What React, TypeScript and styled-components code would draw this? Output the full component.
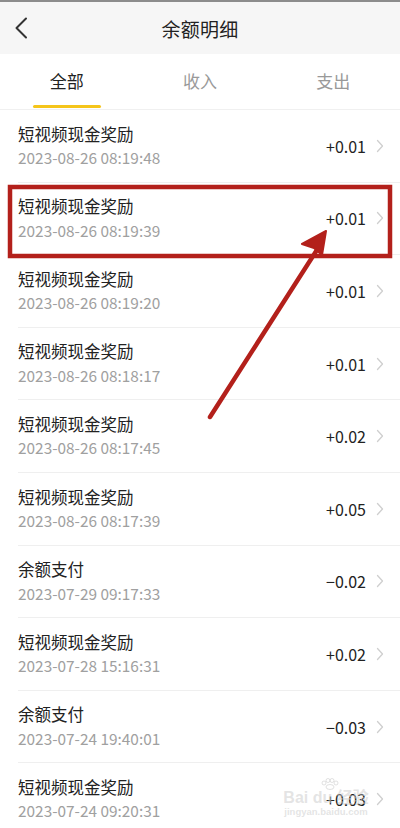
import React from "react";
import styled, { createGlobalStyle } from "styled-components";

const GlobalStyle = createGlobalStyle`
  html, body {
    margin: 0;
    padding: 0;
    background: #ffffff;
  }
  body {
    font-family: "Noto Sans CJK SC", "Noto Sans", Roboto, sans-serif;
    -webkit-font-smoothing: antialiased;
  }
  * { box-sizing: border-box; }
`;

const Page = styled.div`
  position: relative;
  width: 400px;
  height: 828px;
  overflow: hidden;
  background: #ffffff;
`;

const Header = styled.header`
  display: grid;
  grid-template-columns: 1fr auto 1fr;
  align-items: center;
  height: 54px;
  background: #f6f6f6;
  border-top: 2px solid #8c8c8c;
`;

const BackButton = styled.button`
  display: flex;
  align-items: center;
  justify-self: start;
  background: none;
  border: none;
  padding: 0 0 0 13px;
  height: 100%;
  cursor: pointer;
`;

const Title = styled.h1`
  margin: 0;
  font-size: 19px;
  font-weight: 400;
  color: #222222;
  letter-spacing: 0.2px;
`;

const Tabs = styled.nav`
  display: flex;
  height: 56px;
  border-bottom: 1px solid #f0f0f0;
`;

const Tab = styled.div<{ $active?: boolean }>`
  position: relative;
  flex: 1;
  display: flex;
  align-items: center;
  justify-content: center;
  font-size: 17px;
  color: ${(p) => (p.$active ? "#222222" : "#999999")};
  padding-bottom: 2px;

  &::after {
    content: "";
    display: ${(p) => (p.$active ? "block" : "none")};
    position: absolute;
    left: 50%;
    bottom: 1px;
    width: 68px;
    height: 3px;
    margin-left: -34px;
    border-radius: 2px;
    background: #f5c51a;
  }
`;

const List = styled.ul`
  list-style: none;
  margin: 0;
  padding: 0;
`;

const Row = styled.li`
  display: flex;
  align-items: center;
  height: 72.6px;
  margin-left: 18px;
  padding-right: 16px;
  border-bottom: 1px solid #efefef;
`;

const Info = styled.div`
  flex: 1;
  display: flex;
  flex-direction: column;
  padding-bottom: 1px;
`;

const ItemTitle = styled.div`
  font-size: 16.5px;
  line-height: 22px;
  color: #222222;
`;

const ItemDate = styled.div`
  margin-top: 1.5px;
  font-size: 15.4px;
  line-height: 22px;
  color: #a0a0a0;
`;

const Amount = styled.div`
  font-size: 16px;
  color: #222222;
  margin-right: 10px;
`;

const Overlay = styled.svg`
  position: absolute;
  left: 0;
  top: 0;
  pointer-events: none;
`;

const Watermark = styled.div`
  position: absolute;
  right: 30px;
  bottom: 11px;
  width: 88px;
  display: flex;
  flex-direction: column;
  align-items: center;
  color: rgba(205, 205, 205, 0.55);
  font-family: "Liberation Sans", "Noto Sans CJK SC", sans-serif;
  pointer-events: none;
`;

const WatermarkBrand = styled.div`
  font-size: 16px;
  font-weight: 700;
  line-height: 16px;
  white-space: nowrap;
`;

const WatermarkUrl = styled.div`
  font-size: 9.5px;
  font-weight: 700;
  line-height: 11px;
  white-space: nowrap;
`;

const Paw = styled.svg`
  margin-bottom: 0;
  margin-left: 8px;
`;

const BackIcon = () => (
  <svg width="16" height="22" viewBox="0 0 16 22">
    <path d="M13 1.5 L3.5 11 L13 20.5" fill="none" stroke="#333" strokeWidth="2" strokeLinecap="round" strokeLinejoin="round" />
  </svg>
);

const Chevron = () => (
  <svg width="8" height="14" viewBox="0 0 8 14">
    <path d="M1.5 1.5 L6.5 7 L1.5 12.5" fill="none" stroke="#cfcfcf" strokeWidth="1.3" strokeLinecap="round" strokeLinejoin="round" />
  </svg>
);

const PawIcon = () => (
  <Paw width="20" height="12" viewBox="0 0 20 12">
    <g fill="none" stroke="rgba(205,205,205,0.6)" strokeWidth="1">
      <circle cx="4" cy="5" r="2" />
      <circle cx="8" cy="2.5" r="2" />
      <circle cx="12" cy="2.5" r="2" />
      <circle cx="16" cy="5" r="2" />
      <ellipse cx="10" cy="9" rx="4" ry="2.5" />
    </g>
  </Paw>
);

const records = [
  { title: "短视频现金奖励", date: "2023-08-26 08:19:48", amount: "+0.01" },
  { title: "短视频现金奖励", date: "2023-08-26 08:19:39", amount: "+0.01" },
  { title: "短视频现金奖励", date: "2023-08-26 08:19:20", amount: "+0.01" },
  { title: "短视频现金奖励", date: "2023-08-26 08:18:17", amount: "+0.01" },
  { title: "短视频现金奖励", date: "2023-08-26 08:17:45", amount: "+0.02" },
  { title: "短视频现金奖励", date: "2023-08-26 08:17:39", amount: "+0.05" },
  { title: "余额支付", date: "2023-07-29 09:17:33", amount: "−0.02" },
  { title: "短视频现金奖励", date: "2023-07-28 15:16:31", amount: "+0.02" },
  { title: "余额支付", date: "2023-07-24 19:40:01", amount: "−0.03" },
  { title: "短视频现金奖励", date: "2023-07-24 09:20:31", amount: "+0.03" },
];

export default function App() {
  return (
    <Page>
      <GlobalStyle />
      <Header>
        <BackButton aria-label="返回">
          <BackIcon />
        </BackButton>
        <Title>余额明细</Title>
        <span />
      </Header>
      <Tabs>
        <Tab $active>全部</Tab>
        <Tab>收入</Tab>
        <Tab>支出</Tab>
      </Tabs>
      <List>
        {records.map((r, i) => (
          <Row key={i}>
            <Info>
              <ItemTitle>{r.title}</ItemTitle>
              <ItemDate>{r.date}</ItemDate>
            </Info>
            <Amount>{r.amount}</Amount>
            <Chevron />
          </Row>
        ))}
      </List>
      <Watermark>
        <PawIcon />
        <WatermarkBrand>Bai du 经验</WatermarkBrand>
        <WatermarkUrl>jingyan.baidu.com</WatermarkUrl>
      </Watermark>
      <Overlay width="400" height="828" viewBox="0 0 400 828">
        <rect x="10" y="187" width="380" height="69" fill="none" stroke="#b3201b" strokeWidth="4.5" />
        <line x1="210" y1="417" x2="322" y2="242" stroke="#b3201b" strokeWidth="4.5" strokeLinecap="round" />
        <path d="M326 231 L302 244 L314 248 L322 255 Z" fill="#b3201b" stroke="#b3201b" strokeWidth="2" strokeLinejoin="round" />
      </Overlay>
    </Page>
  );
}
